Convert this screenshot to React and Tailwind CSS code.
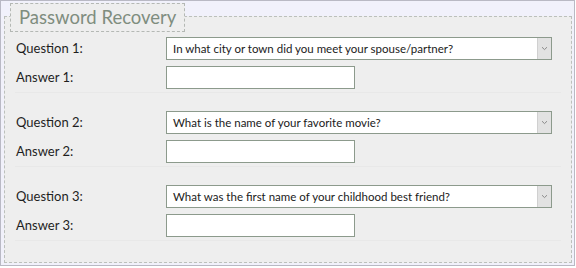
import React from "react";

const groups = [
  { n: 1, q: "In what city or town did you meet your spouse/partner?" },
  { n: 2, q: "What is the name of your favorite movie?" },
  { n: 3, q: "What was the first name of your childhood best friend?" },
];

function Chevron() {
  return (
    <svg width="7" height="5" viewBox="0 0 7 5" className="text-[#8a8a8a]">
      <path d="M1 1.2 L3.5 3.6 L6 1.2" fill="none" stroke="currentColor" strokeWidth="1" />
    </svg>
  );
}

export default function App() {
  return (
    <div
      className="relative w-[575px] h-[266px] border border-[#b9b9c4] bg-[#f1f1fb]"
      style={{ fontFamily: "Lato, 'Open Sans', sans-serif" }}
    >
      <div className="absolute left-[9px] top-[2px] w-[175px] h-[29px] border border-dashed border-[#b4b8b4] bg-[#eeeeee] z-10 pl-[8px] flex items-center">
        <span className="whitespace-nowrap text-[18.5px] leading-none text-[#7f8d7f]">Password Recovery</span>
      </div>

      <div className="ml-[3px] mt-[15px] w-[568px] h-[247px] border border-dashed border-[#bcc0bc] bg-[#eeeeee] pt-[20px]">
        {groups.map((g) => (
          <div key={g.n} className="h-[74px]">
            <div className="flex items-center h-[23px]">
              <div className="w-[161px] pl-[11px] text-[13px] text-[#1e1e1e]">Question {g.n}:</div>
              <div className="flex w-[386px] h-[23px] border border-[#8c9a8c] bg-white">
                <div className="flex-1 flex items-center pl-[6px] text-[11.5px] text-[#1a1a1a] whitespace-nowrap">{g.q}</div>
                <div className="w-[14px] bg-[#e2e2e2] border-l border-[#d0d0d0] flex items-center justify-center">
                  <Chevron />
                </div>
              </div>
            </div>
            <div className="flex items-center h-[23px] mt-[6px]">
              <div className="w-[161px] pl-[11px] text-[13px] text-[#1e1e1e]">Answer {g.n}:</div>
              <div className="w-[189px] h-[23px] border border-[#8c9a8c] bg-white" />
            </div>
            <div className="mt-[3px] mx-[10px] border-t border-[#e8e8e8]" />
          </div>
        ))}
      </div>
    </div>
  );
}
